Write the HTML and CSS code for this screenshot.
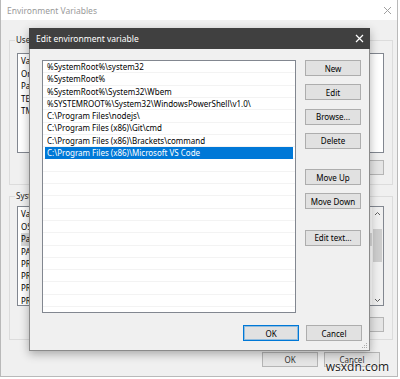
FILE: index.html
```html
<!DOCTYPE html>
<html>
<head>
<meta charset="UTF-8">
<title>Environment Variables</title>
<link rel="stylesheet" href="styles.css">
</head>
<body>
<div class="win">
	<div class="win-title">
		<span>Environment Variables</span>
		<svg class="win-close" width="9" height="9" viewBox="0 0 9 9"><path d="M1 1L8 8M8 1L1 8" stroke="#a0a0a0" stroke-width="1"/></svg>
	</div>
	<div class="win-body">
		<div class="group user-group">
			<div class="group-label">User variables</div>
			<div class="varlist">
				<div class="varlist-rows">
					<div class="var-head"><span class="c1">Variable</span><span>Value</span></div>
					<div class="var-row"><span class="c1">OneDrive</span><span>C:\Users\Admin\OneDrive</span></div>
					<div class="var-row"><span class="c1">Path</span><span>C:\Users\Admin\AppData\Local\Microsoft\WindowsApps</span></div>
					<div class="var-row"><span class="c1">TEMP</span><span>%USERPROFILE%\AppData\Local\Temp</span></div>
					<div class="var-row"><span class="c1">TMP</span><span>%USERPROFILE%\AppData\Local\Temp</span></div>
				</div>
			</div>
			<div class="group-buttons">
				<button class="btn-bg">New...</button>
				<button class="btn-bg">Edit...</button>
				<button class="btn-bg">Delete</button>
			</div>
		</div>

		<div class="group sys-group">
			<div class="group-label">System variables</div>
			<div class="varlist">
				<div class="varlist-rows">
					<div class="var-head"><span class="c1">Variable</span><span>Value</span></div>
					<div class="var-row"><span class="c1">OS</span><span>Windows_NT</span></div>
					<div class="var-row picked"><span class="c1">Path</span><span>C:\Windows\system32;C:\Windows</span></div>
					<div class="var-row"><span class="c1">PATHEXT</span><span>.COM;.EXE;.BAT;.CMD</span></div>
					<div class="var-row"><span class="c1">PROCESSOR_ARCHITECTURE</span><span>AMD64</span></div>
					<div class="var-row"><span class="c1">PROCESSOR_IDENTIFIER</span><span>Intel64 Family 6</span></div>
					<div class="var-row"><span class="c1">PROCESSOR_LEVEL</span><span>6</span></div>
					<div class="var-row"><span class="c1">PROCESSOR_REVISION</span><span>3a09</span></div>
				</div>
				<div class="scrollbar">
					<svg width="11" height="10" viewBox="0 0 11 10"><path d="M3 6L5.5 3.5L8 6" fill="none" stroke="#606060" stroke-width="1"/></svg>
					<div class="scroll-track"><div class="scroll-thumb"></div></div>
					<svg width="11" height="10" viewBox="0 0 11 10"><path d="M3 4L5.5 6.5L8 4" fill="none" stroke="#606060" stroke-width="1"/></svg>
				</div>
			</div>
			<div class="group-buttons sys-buttons">
				<button class="btn-bg">New...</button>
				<button class="btn-bg">Edit...</button>
				<button class="btn-bg">Delete</button>
			</div>
		</div>

		<div class="win-footer">
			<button class="btn-bg">OK</button>
			<button class="btn-bg">Cancel</button>
		</div>
	</div>

	<!-- edit dialog on top -->
	<div class="dlg">
		<div class="dlg-title">
			<span>Edit environment variable</span>
			<svg width="9" height="9" viewBox="0 0 9 9"><path d="M1 1L8 8M8 1L1 8" stroke="#fff" stroke-width="1.2"/></svg>
		</div>
		<div class="dlg-body">
			<div class="dlg-main">
				<div class="pathlist">
					<div class="path-row">%SystemRoot%\system32</div>
					<div class="path-row">%SystemRoot%</div>
					<div class="path-row">%SystemRoot%\System32\Wbem</div>
					<div class="path-row">%SYSTEMROOT%\System32\WindowsPowerShell\v1.0\</div>
					<div class="path-row">C:\Program Files\nodejs\</div>
					<div class="path-row">C:\Program Files (x86)\Git\cmd</div>
					<div class="path-row">C:\Program Files (x86)\Brackets\command</div>
					<div class="path-row selected">C:\Program Files (x86)\Microsoft VS Code</div>
				</div>
				<div class="dlg-buttons">
					<button class="btn">New</button>
					<button class="btn">Edit</button>
					<button class="btn">Browse...</button>
					<button class="btn">Delete</button>
					<button class="btn spaced">Move Up</button>
					<button class="btn">Move Down</button>
					<button class="btn spaced">Edit text...</button>
				</div>
			</div>
			<div class="dlg-footer">
				<button class="btn default">OK</button>
				<button class="btn">Cancel</button>
			</div>
		</div>
		<svg class="grip" width="7" height="7" viewBox="0 0 7 7">
			<rect x="5" y="1" width="1" height="1" fill="#aaa"/>
			<rect x="3" y="3" width="1" height="1" fill="#aaa"/>
			<rect x="5" y="3" width="1" height="1" fill="#aaa"/>
			<rect x="1" y="5" width="1" height="1" fill="#aaa"/>
			<rect x="3" y="5" width="1" height="1" fill="#aaa"/>
			<rect x="5" y="5" width="1" height="1" fill="#aaa"/>
		</svg>
	</div>

	<div class="watermark">wsxdn.com</div>
</div>
</body>
</html>
```

FILE: styles.css
```css
body
{
	margin: 0;
	font-family: "Noto Sans", "Open Sans", sans-serif;
	font-size: 8px;
	color: #000;
	background: #fff;
}

button
{
	font-family: inherit;
	font-size: 8px;
	color: #000;
	padding: 0;
	margin: 0;
	background: #e1e1e1;
	border: 1px solid #adadad;
	box-sizing: border-box;
}

/* background window */

.win
{
	position: relative;
	width: 398px;
	height: 377px;
	box-sizing: border-box;
	border: 1px solid #b9b9b9;
	border-top: 0;
	background: #f0f0f0;
	overflow: hidden;
}

.win-title
{
	height: 20px;
	background: #fff;
	display: flex;
	align-items: center;
	justify-content: space-between;
	padding: 0 5px 0 6px;
	color: #9a9a9a;
	font-size: 8.5px;
}

.win-body
{
	padding: 0 4px 0 8px;
}

.group
{
	border: 1px solid #dcdcdc;
	padding: 0 8px 9px 7px;
}

.user-group
{
	margin-top: 20px;
}

.sys-group
{
	margin-top: 11px;
	padding-bottom: 7px;
}

.group-label
{
	line-height: 12px;
	margin: -7px 0 0 -2px;
	padding: 0 1px;
	width: fit-content;
	background: #f0f0f0;
	color: #222;
}

.varlist
{
	margin-top: 7px;
	height: 100px;
	box-sizing: border-box;
	border: 1px solid #828790;
	background: #fff;
	display: flex;
	overflow: hidden;
}

.sys-group .varlist
{
	margin-top: 4px;
}

.varlist-rows
{
	flex: 1;
	padding-left: 3px;
	white-space: nowrap;
}

.var-head
{
	height: 14px;
	line-height: 14px;
	display: flex;
}

.var-row
{
	height: 12.3px;
	line-height: 12.3px;
	display: flex;
}

.var-row.picked
{
	background: #d9d9d9;
}

.c1
{
	width: 120px;
	flex: none;
}

.scrollbar
{
	width: 11px;
	display: flex;
	flex-direction: column;
	background: #f0f0f0;
	padding-top: 2px;
}

.scroll-track
{
	flex: 1;
	padding-top: 10px;
}

.scroll-thumb
{
	height: 33px;
	margin: 0 1px;
	background: #cdcdcd;
}

.group-buttons
{
	margin-top: 7px;
	display: flex;
	justify-content: flex-end;
	gap: 6px;
}

.sys-buttons
{
	margin-top: 11px;
}

.btn-bg
{
	width: 56px;
	height: 15px;
	background: #e5e5e5;
	border-color: #b5b5b5;
	color: #333;
}

.win-footer
{
	margin-top: 12px;
	padding-right: 13px;
	display: flex;
	justify-content: flex-end;
	gap: 6px;
}

/* edit dialog */

.dlg
{
	position: absolute;
	left: 28px;
	top: 28px;
	width: 341px;
	height: 323px;
	box-sizing: border-box;
	border: 1px solid #8a8a8a;
	border-top: 0;
	background: #f0f0f0;
	box-shadow: 0 3px 9px rgba(0, 0, 0, 0.3);
}

.dlg-title
{
	height: 21px;
	margin: 0 -1px;
	padding: 0 6px 0 7px;
	background: #404040;
	color: #fff;
	font-size: 8.5px;
	display: flex;
	align-items: center;
	justify-content: space-between;
}

.dlg-body
{
	padding: 11px 7px 0 12px;
}

.dlg-main
{
	display: grid;
	grid-template-columns: 254px 56px;
	column-gap: 9px;
}

.pathlist
{
	height: 253px;
	box-sizing: border-box;
	border: 1px solid #828790;
	padding: 0 2px;
	background-color: #fff;
	background-image: repeating-linear-gradient(to bottom, transparent 0, transparent 11.3px, #f3f3f3 11.3px, #f3f3f3 12.3px);
	white-space: nowrap;
	overflow: hidden;
}

.path-row
{
	height: 12.3px;
	line-height: 12.3px;
	padding-left: 2px;
}

.path-row.selected
{
	background: #0078d7;
	color: #fff;
}

.dlg-buttons
{
	display: flex;
	flex-direction: column;
	gap: 8.3px;
}

.btn
{
	width: 56px;
	height: 16px;
}

.btn.spaced
{
	margin-top: 12px;
}

.btn.default
{
	border-color: #0078d7;
	box-shadow: inset 0 0 0 1px rgba(0, 120, 215, 0.35);
}

.dlg-footer
{
	margin-top: 12px;
	display: flex;
	justify-content: flex-end;
	gap: 7px;
}

.grip
{
	position: absolute;
	right: 1px;
	bottom: 1px;
}

.watermark
{
	position: absolute;
	right: 8px;
	bottom: 1px;
	font-family: "Open Sans", sans-serif;
	font-size: 12px;
	color: #1a1a1a;
	text-shadow: 0 0 2px #fff, 0 0 2px #fff;
}
```
